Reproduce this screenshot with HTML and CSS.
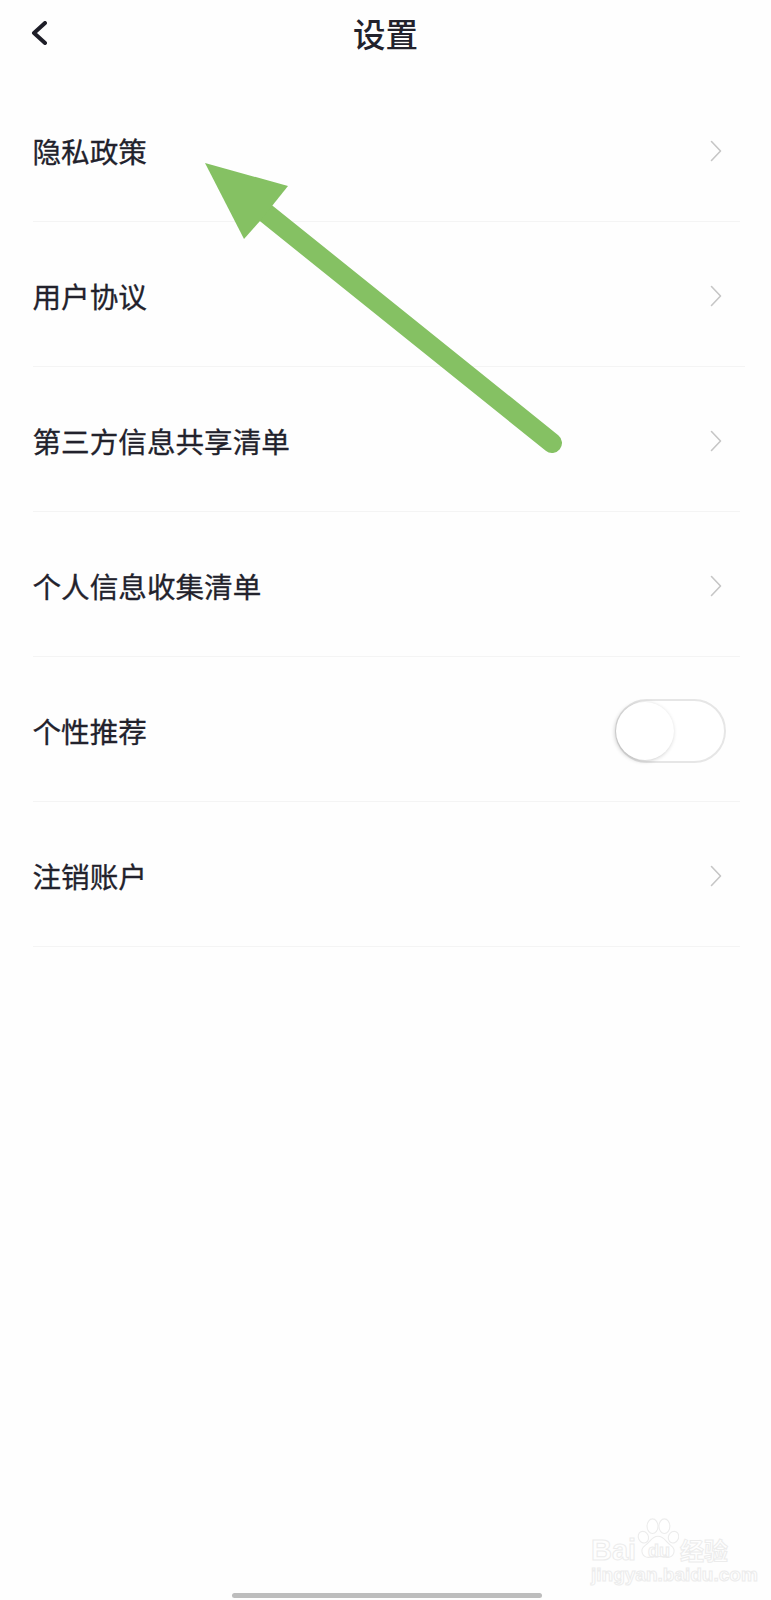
FILE: index.html
```html
<!DOCTYPE html>
<html lang="zh-CN">
<head>
  <meta charset="UTF-8" />
  <meta name="viewport" content="width=device-width, initial-scale=1.0" />
  <title>设置</title>
  <link rel="stylesheet" href="styles.css">
</head>
<body>

  <div class="page">
    <div class="navbar">
      <a class="back" href="#">
        <svg width="16" height="24" viewBox="0 0 16 24"><path d="M14 2 L3 12 L14 22" /></svg>
      </a>
      <h1>设置</h1>
    </div>

    <div class="list">
      <div class="row">
        <span>隐私政策</span>
        <svg class="chevron" width="12" height="22" viewBox="0 0 12 22"><path d="M1.5 1.5 L10.5 11 L1.5 20.5" /></svg>
      </div>
      <div class="row row-long">
        <span>用户协议</span>
        <svg class="chevron" width="12" height="22" viewBox="0 0 12 22"><path d="M1.5 1.5 L10.5 11 L1.5 20.5" /></svg>
      </div>
      <div class="row">
        <span>第三方信息共享清单</span>
        <svg class="chevron" width="12" height="22" viewBox="0 0 12 22"><path d="M1.5 1.5 L10.5 11 L1.5 20.5" /></svg>
      </div>
      <div class="row">
        <span>个人信息收集清单</span>
        <svg class="chevron" width="12" height="22" viewBox="0 0 12 22"><path d="M1.5 1.5 L10.5 11 L1.5 20.5" /></svg>
      </div>
      <div class="row">
        <span>个性推荐</span>
        <div class="switch"><div class="knob"></div></div>
      </div>
      <div class="row">
        <span>注销账户</span>
        <svg class="chevron" width="12" height="22" viewBox="0 0 12 22"><path d="M1.5 1.5 L10.5 11 L1.5 20.5" /></svg>
      </div>
    </div>

    <!-- annotation drawn over the screenshot -->
    <svg class="arrow" width="771" height="500" viewBox="0 0 771 500">
      <path class="arrow-line" d="M262 210 L552 443" />
      <path class="arrow-head" d="M205 163 L288 186 L272 206 L260 221 L244 239 Z" />
    </svg>

    <div class="watermark">
      <svg class="paw" width="42" height="42" viewBox="0 0 46 46">
        <ellipse cx="7" cy="21" rx="5.5" ry="6.5" transform="rotate(-25 7 21)" />
        <ellipse cx="17" cy="9" rx="6" ry="8" />
        <ellipse cx="30" cy="9" rx="6" ry="8" />
        <ellipse cx="40" cy="21" rx="5.5" ry="6.5" transform="rotate(25 40 21)" />
        <path d="M23 20 C30 20 32 27 37 30 C44 35 40 44 32 43 C27 42 19 42 14 43 C6 44 2 35 9 30 C14 27 16 20 23 20 Z" />
      </svg>
      <span class="wm-bai">Bai</span>
      <span class="wm-du">du</span>
      <span class="wm-cn">经验</span>
      <span class="wm-url">jingyan.baidu.com</span>
    </div>

    <div class="home-bar"></div>
  </div>

</body>
</html>
```

FILE: styles.css
```css
body {
  margin: 0;
  font-family: "Noto Sans CJK SC", "Liberation Sans", sans-serif;
  background-color: #fefefe;
  color: #22222c;
}

.page {
  position: relative;
  height: 1600px;
  overflow: hidden;
}

.navbar {
  position: relative;
  height: 77px;
  display: flex;
  align-items: flex-start;
  justify-content: center;
}

.navbar h1 {
  margin: 11px 0 0;
  font-size: 32.5px;
  line-height: 44px;
  font-weight: 500;
}

.back {
  position: absolute;
  left: 31px;
  top: 21px;
  display: flex;
}

.back path {
  fill: none;
  stroke: #1e1e28;
  stroke-width: 4;
  stroke-linecap: round;
  stroke-linejoin: round;
}

.list {
  margin-left: 33px;
  width: 707px;
}

.row {
  box-sizing: border-box;
  height: 145px;
  padding-right: 18px;
  border-bottom: 1px solid #f4f4f4;
  display: flex;
  align-items: center;
  justify-content: space-between;
  font-size: 28.6px;
  line-height: 40px;
}

.row span {
  position: relative;
  left: -0.5px;
  top: 2px;
  -webkit-text-stroke: 0.3px #22222c;
}

.row-long {
  width: 712px;
  padding-right: 23px;
}

.chevron {
  position: relative;
  top: 2px;
  flex-shrink: 0;
}

.chevron path {
  fill: none;
  stroke: #c6c6c6;
  stroke-width: 1.6;
  stroke-linecap: round;
  stroke-linejoin: round;
}

.switch {
  position: relative;
  top: 2px;
  left: 3px;
  width: 107px;
  height: 60px;
  margin-right: -1px;
  border: 2.5px solid #e6e6e6;
  border-radius: 32px;
  background-color: #fff;
}

.knob {
  width: 58px;
  height: 58px;
  margin: 1px 0 0 -1px;
  border-radius: 50%;
  background-color: #fff;
  box-shadow: -1px 1px 4px rgba(0, 0, 0, 0.22);
}

.arrow {
  position: absolute;
  left: 0;
  top: 0;
}

.arrow-line {
  fill: none;
  stroke: #85c163;
  stroke-width: 20;
  stroke-linecap: round;
}

.arrow-head {
  fill: #85c163;
}

.watermark {
  position: absolute;
  left: 590px;
  top: 1516px;
  width: 140px;
  height: 68px;
  color: transparent;
  -webkit-text-stroke: 1px #ececec;
}

.watermark span {
  position: absolute;
  font-family: "Liberation Sans", sans-serif;
  font-weight: 700;
}

.paw {
  position: absolute;
  left: 47px;
  top: 2px;
}

.paw ellipse,
.paw path {
  fill: #fff;
  stroke: #ececec;
  stroke-width: 1.2;
}

.wm-bai {
  left: 1px;
  top: 18px;
  font-size: 29px;
  line-height: 32px;
}

.wm-du {
  left: 58px;
  top: 25px;
  font-size: 18px;
  line-height: 20px;
}

.watermark .wm-cn {
  left: 90px;
  top: 19px;
  font-family: "Noto Sans CJK SC", sans-serif;
  font-size: 24px;
  line-height: 30px;
}

.wm-url {
  left: 1px;
  top: 49px;
  font-size: 19px;
  line-height: 20px;
  font-weight: 400;
  white-space: nowrap;
}

.home-bar {
  position: absolute;
  left: 232px;
  top: 1593px;
  width: 310px;
  height: 5px;
  border-radius: 3px;
  background-color: #bdbdbd;
}
```
